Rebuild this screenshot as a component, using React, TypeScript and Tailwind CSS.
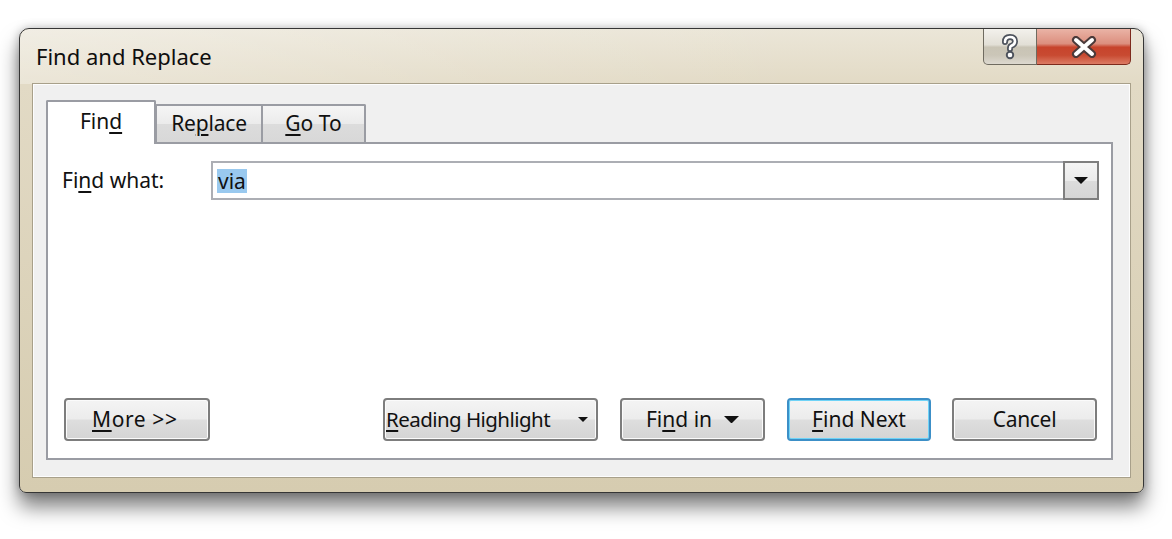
import React from 'react'

const btnBg =
  'bg-[linear-gradient(180deg,#f4f4f4_0%,#ececec_48%,#dedede_52%,#d4d4d4_100%)]'

function Key({ children }: { children: React.ReactNode }) {
  return <span className="underline decoration-[1.5px] underline-offset-[3px]">{children}</span>
}

function Arrow({ w = 14 }: { w?: number }) {
  return (
    <svg width={w} height={w / 2} viewBox="0 0 14 7" className="shrink-0">
      <path d="M0 0h14L7 7z" fill="#111" />
    </svg>
  )
}

function Button({
  children,
  w,
  focused,
  className = '',
}: {
  children: React.ReactNode
  w: string
  focused?: boolean
  className?: string
}) {
  return (
    <button
      className={`${w} h-[43px] rounded-[4px] border-2 ${
        focused
          ? 'border-[#3c8fc7] shadow-[inset_0_0_0_1px_#6fd3f7]'
          : 'border-[#7d7d7d] shadow-[inset_0_0_0_1px_#fbfbfb]'
      } ${btnBg} flex items-center text-[21px] text-[#111] ${className}`}
    >
      {children}
    </button>
  )
}

export default function App() {
  return (
    <div className="w-[1172px] h-[539px] bg-white pt-[28px] pl-[19px] font-['Noto_Sans',sans-serif]">
      <div className="w-[1125px] h-[465px] flex flex-col rounded-t-[10px] rounded-b-[7px] border border-[#363636] bg-[linear-gradient(180deg,#ebe6d8_0%,#e2dac5_12%,#d6ccb0_100%)] shadow-[0_14px_20px_rgba(0,0,0,0.5),0_0_10px_rgba(0,0,0,0.25)]">
        {/* title bar */}
        <div className="h-[55px] flex items-start bg-[linear-gradient(90deg,rgba(255,255,255,0.3)_0%,rgba(255,255,255,0.1)_40%,rgba(255,255,255,0)_70%)] rounded-t-[10px]">
          <div className="pl-[16px] pt-[11px] text-[22px] text-[#0e0e0e]">Find and Replace</div>
          <div className="ml-auto mr-[12px] flex">
            <div className="w-[54px] h-[36px] rounded-bl-[5px] border border-t-0 border-[#6f6b60] bg-[linear-gradient(180deg,#f3f1ec_0%,#e2dfd6_45%,#c9c4b5_52%,#cbc6b8_75%,#ddd9d0_100%)] flex items-center justify-center">
              <svg width="20" height="26" viewBox="0 0 20 26">
                <g fill="none" strokeLinecap="round" strokeLinejoin="round">
                  <path d="M5 8 Q5 3 10 3 Q15 3 15 7.5 Q15 10.5 11 12 Q10 12.5 10 15" stroke="#4d525c" strokeWidth="6" />
                  <circle cx="10" cy="21" r="1.2" stroke="#4d525c" strokeWidth="6" />
                  <path d="M5 8 Q5 3 10 3 Q15 3 15 7.5 Q15 10.5 11 12 Q10 12.5 10 15" stroke="#fff" strokeWidth="2.6" />
                  <circle cx="10" cy="21" r="1" stroke="#fff" strokeWidth="2.6" />
                </g>
              </svg>
            </div>
            <div className="w-[94px] h-[36px] rounded-br-[5px] border border-l-0 border-t-0 border-[#7d2a1c] bg-[linear-gradient(180deg,#eab3a6_0%,#dc8f7e_42%,#c7442c_52%,#c84a31_75%,#dc7b64_100%)] flex items-center justify-center">
              <svg width="28" height="22" viewBox="0 0 28 22">
                <g fill="none" strokeLinecap="round">
                  <path d="M6 4 L22 18 M22 4 L6 18" stroke="#4b3a3a" strokeWidth="8" />
                  <path d="M6 4 L22 18 M22 4 L6 18" stroke="#fff" strokeWidth="4" />
                </g>
              </svg>
            </div>
          </div>
        </div>

        {/* client area */}
        <div className="flex-1 mx-[13px] mb-[15px] flex flex-col bg-[#f0f0f0] border border-[#fdfdfd] shadow-[0_0_0_1px_#a8a08a] pl-[12px] pt-[15px] pr-[16px] pb-[16px]">
          {/* tabs */}
          <div className="h-[42px] flex items-end text-[21px] text-[#111]">
            <div className="relative z-10 -mb-[2px] w-[110px] h-[44px] bg-white border-2 border-b-0 border-[#9a9ca3] rounded-t-[2px] flex items-center justify-center pb-[2px]">
              Fin<Key>d</Key>
            </div>
            <div className="w-[108px] h-[38px] -ml-[1px] border-2 border-b-0 border-[#9a9ca3] rounded-t-[2px] bg-[linear-gradient(180deg,#f5f5f5_0%,#ebebeb_50%,#dcdcdc_51%,#d8d8d8_100%)] flex items-center justify-center tracking-[-0.2px]">
              Re<Key>p</Key>lace
            </div>
            <div className="w-[105px] h-[38px] -ml-[2px] border-2 border-b-0 border-[#9a9ca3] rounded-t-[2px] bg-[linear-gradient(180deg,#f5f5f5_0%,#ebebeb_50%,#dcdcdc_51%,#d8d8d8_100%)] flex items-center justify-center">
              <Key>G</Key>o To
            </div>
          </div>

          {/* panel */}
          <div className="flex-1 flex flex-col bg-white border-2 border-[#9a9ca3] pl-[14px] pr-[12px] pt-[17px] pb-[17px]">
            <div className="flex items-center">
              <div className="w-[149px] text-[21px] text-[#111]">
                Fi<Key>n</Key>d what:
              </div>
              <div className="flex-1 h-[39px] flex items-center border-2 border-[#acaeb4] bg-white">
                <span className="ml-[4px] h-[24px] leading-[24px] px-[1px] bg-[#99c9ef] text-[21px] text-[#111]">
                  via
                </span>
                <div className="ml-auto -mr-[2px] -my-[2px] w-[36px] h-[39px] border-2 border-[#7e7e7e] bg-[linear-gradient(180deg,#f4f4f4_0%,#ebebeb_50%,#dcdcdc_51%,#d5d5d5_100%)] flex items-center justify-center">
                  <Arrow w={14} />
                </div>
              </div>
            </div>

            <div className="mt-auto flex items-center pl-[2px] pr-[2px]">
              <Button w="w-[146px]" className="justify-start pl-[26px] tracking-[0.6px]">
                <Key>M</Key>ore &gt;&gt;
              </Button>
              <div className="ml-auto flex gap-[22px]">
                <Button w="w-[215px]" className="pl-[1px] pr-[8px] justify-between">
                  <span className="text-[20.5px] tracking-[-0.55px]">
                    <Key>R</Key>eading Highlight
                  </span>
                  <Arrow w={10} />
                </Button>
                <Button w="w-[145px]" className="justify-center gap-[12px]">
                  <span>
                    Fi<Key>n</Key>d in
                  </span>
                  <Arrow w={15} />
                </Button>
                <Button w="w-[144px]" focused className="justify-center">
                  <span>
                    <Key>F</Key>ind Next
                  </span>
                </Button>
                <Button w="w-[145px]" className="justify-center -ml-[1px] tracking-[-0.3px]">
                  Cancel
                </Button>
              </div>
            </div>
          </div>
        </div>
      </div>
    </div>
  )
}
